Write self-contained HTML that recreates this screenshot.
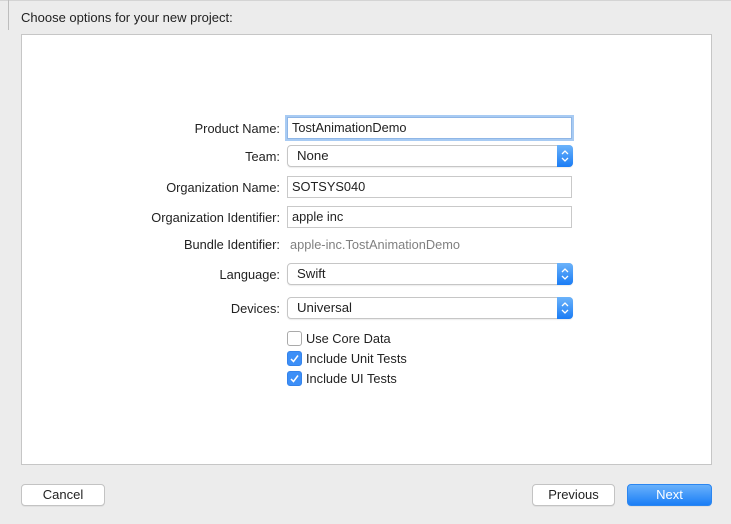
<!DOCTYPE html><html><head><style>
body{margin:0;width:731px;height:524px;background:#ececec;font-family:"Liberation Sans",sans-serif;font-size:12.8px;color:#222;position:relative;overflow:hidden}
.a{position:absolute}
.top{left:0;top:0;width:731px;height:1px;background:#d4d4d4}
.lft{left:8px;top:0;width:1px;height:30px;background:#bdbdbd}
.panel{left:21px;top:34px;width:689px;height:429px;background:#fff;border:1px solid #c6c6c6}
.lbl{right:451px;text-align:right;white-space:nowrap}
.tf{left:287px;width:279px;height:20px;border:1px solid #c9c9c9;padding-left:4px;line-height:20px;background:#fff}
.pop{left:287px;width:284px;height:20px;border:1px solid #c6c6c6;border-radius:4px;box-shadow:0 1px 1px rgba(0,0,0,.08);line-height:20px;background:#fff;font-size:13.2px}
.pop span{padding-left:9px}
.pop i{position:absolute;right:-1px;top:-1px;width:16px;height:22px;background:linear-gradient(#6cb3fa,#1a7cf5);border-radius:0 4px 4px 0}
.cb{left:287px;width:13px;height:13px;border:1px solid #aaa;border-radius:3px;background:#fff}
.cb.on{background:#3d8ff7;border-color:#3583ea}
.ct{left:306px}
.btn{height:20px;border:1px solid #c3c3c3;border-radius:4px;background:#fff;text-align:center;line-height:20px;font-size:13px;box-shadow:0 1px 0 rgba(0,0,0,.05)}
</style></head><body>
<div class="a top"></div><div class="a lft"></div>
<div class="a" style="left:21px;top:10px;font-size:13px">Choose options for your new project:</div>
<div class="a panel"></div>
<div class="a lbl" style="top:121px">Product Name:</div>
<div class="a tf" style="top:117px;border:1px solid #8fb6e6;box-shadow:0 0 0 2px #a8cbf3">TostAnimationDemo</div>
<div class="a lbl" style="top:149px">Team:</div>
<div class="a pop" style="top:145px"><span>None</span><i><svg width="16" height="22"><path d="M5 9l3-3 3 3M5 13l3 3 3-3" stroke="#fff" stroke-width="1.3" fill="none"/></svg></i></div>
<div class="a lbl" style="top:180px">Organization Name:</div>
<div class="a tf" style="top:176px">SOTSYS040</div>
<div class="a lbl" style="top:210px">Organization Identifier:</div>
<div class="a tf" style="top:206px">apple inc</div>
<div class="a lbl" style="top:237px">Bundle Identifier:</div>
<div class="a" style="left:290px;top:237px;color:#808080">apple-inc.TostAnimationDemo</div>
<div class="a lbl" style="top:267px">Language:</div>
<div class="a pop" style="top:263px"><span>Swift</span><i><svg width="16" height="22"><path d="M5 9l3-3 3 3M5 13l3 3 3-3" stroke="#fff" stroke-width="1.3" fill="none"/></svg></i></div>
<div class="a lbl" style="top:301px">Devices:</div>
<div class="a pop" style="top:297px"><span>Universal</span><i><svg width="16" height="22"><path d="M5 9l3-3 3 3M5 13l3 3 3-3" stroke="#fff" stroke-width="1.3" fill="none"/></svg></i></div>
<div class="a cb" style="top:331px"></div><div class="a ct" style="top:331px">Use Core Data</div>
<div class="a cb on" style="top:351px"><svg width="13" height="13"><path d="M3 7l2.5 2.5L10 3.5" stroke="#fff" stroke-width="1.5" fill="none"/></svg></div><div class="a ct" style="top:351px">Include Unit Tests</div>
<div class="a cb on" style="top:371px"><svg width="13" height="13"><path d="M3 7l2.5 2.5L10 3.5" stroke="#fff" stroke-width="1.5" fill="none"/></svg></div><div class="a ct" style="top:371px">Include UI Tests</div>
<div class="a btn" style="left:21px;top:484px;width:82px">Cancel</div>
<div class="a btn" style="left:532px;top:484px;width:81px">Previous</div>
<div class="a btn" style="left:627px;top:484px;width:83px;background:linear-gradient(#69b1fb,#1b7ef6);border-color:#2b86f0;color:#fff">Next</div>
</body></html>
